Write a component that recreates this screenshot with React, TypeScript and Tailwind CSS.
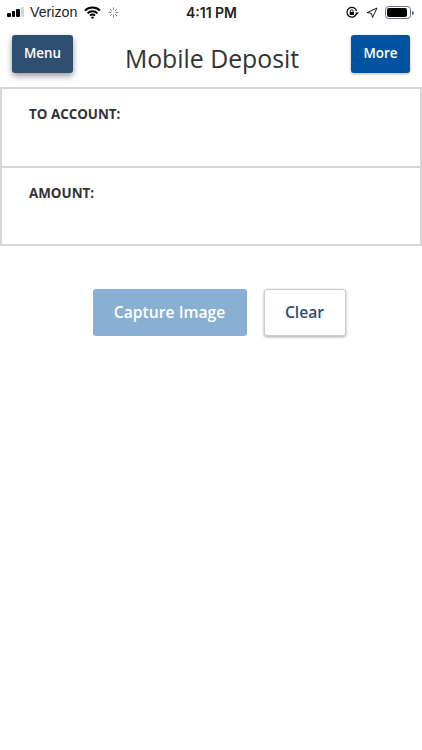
import { Navigation } from "lucide-react";

function StatusBar() {
  return (
    <div className="flex h-[25px] items-center justify-between pl-[7px] pr-[8px] text-[14.2px] text-[#222]">
      <div className="flex w-[150px] items-center">
        <div className="flex items-end gap-[1px]">
          <span className="h-[4px] w-[3.5px] rounded-[1px] bg-black" />
          <span className="h-[6px] w-[3.5px] rounded-[1px] bg-black" />
          <span className="h-[8px] w-[3.5px] rounded-[1px] bg-black" />
          <span className="h-[10px] w-[3.5px] rounded-[1px] bg-gray-300" />
        </div>
        <span className="ml-[6px]">Verizon</span>
        <svg className="ml-[7px]" width="17" height="13" viewBox="0 0 17 13" fill="none" stroke="#000" strokeWidth="2">
          <path d="M1 4.6A10.8 10.8 0 0 1 16 4.6" />
          <path d="M3.6 7.2A7.1 7.1 0 0 1 13.4 7.2" />
          <path d="M6 9.6A3.6 3.6 0 0 1 11 9.6" />
          <circle cx="8.5" cy="11.6" r="1.2" fill="#000" stroke="none" />
        </svg>
        <svg className="ml-[7px]" width="11" height="11" viewBox="0 0 12 12" stroke="#777" strokeWidth="1">
          <path d="M6 0.5V3.5M6 8.5V11.5M0.5 6H3.5M8.5 6H11.5M2.1 2.1L4.2 4.2M7.8 7.8L9.9 9.9M2.1 9.9L4.2 7.8M7.8 4.2L9.9 2.1" />
        </svg>
      </div>
      <span className="ml-[2px] font-['Inter',sans-serif] text-[14px] font-semibold">4:11 PM</span>
      <div className="flex w-[150px] items-center justify-end">
        <svg width="13" height="13" viewBox="0 0 13 13" fill="none" stroke="#000" strokeWidth="1.2">
          <path d="M10.6 7.5A4.9 4.9 0 1 1 10.6 5" />
          <path d="M9 6.4H13L11 8.8Z" fill="#000" stroke="none" />
          <rect x="3.7" y="6" width="4.2" height="3" fill="#000" stroke="none" />
          <path d="M4.5 6V5A1.3 1.3 0 0 1 7.1 5V6" strokeWidth="0.9" />
        </svg>
        <Navigation className="ml-[7px] h-[12px] w-[12px] text-black" strokeWidth={1.8} />
        <div className="ml-[7px] flex items-center">
          <div className="flex h-[13px] w-[26px] items-center rounded-[3.5px] border border-gray-500 p-[1px]">
            <div className="h-full w-[20px] rounded-[2px] bg-black" />
          </div>
          <span className="ml-[1px] h-[4px] w-[1.5px] rounded-r-sm bg-gray-500" />
        </div>
      </div>
    </div>
  );
}

function Field({ label }: { label: string }) {
  return (
    <div className="h-[79px] border-2 border-[#d6d6d6] border-b-0 pl-[27px] pt-[15px] text-[13.4px] font-bold leading-[20px] text-[#333] last:h-[80px] last:border-b-2">
      {label}
    </div>
  );
}

export default function App() {
  return (
    <div className="min-h-[750px] bg-white font-['Open_Sans',sans-serif]">
      <div className="font-['Liberation_Sans',sans-serif]">
        <StatusBar />
      </div>
      <header className="flex h-[62px] items-start justify-between pl-[12px] pr-[12px] pt-[10px]">
        <button className="flex h-[38px] w-[61px] items-center justify-center rounded-[3px] bg-[#2f4f70] pb-[2px] text-[13.4px] font-semibold text-white shadow-[0_3px_6px_rgba(0,0,0,0.4)]">
          Menu
        </button>
        <h1 className="mt-[5px] text-[24.8px] leading-[36px] text-[#333]">Mobile Deposit</h1>
        <button className="flex h-[38px] w-[59px] items-center justify-center rounded-[3px] bg-[#00549f] pb-[2px] text-[13.4px] font-semibold text-white shadow-[0_1px_3px_rgba(0,0,0,0.3)]">
          More
        </button>
      </header>
      <div className="flex flex-col">
        <Field label="TO ACCOUNT:" />
        <Field label="AMOUNT:" />
      </div>
      <div className="mt-[43px] flex justify-center gap-[17px] pl-[16px]">
        <button className="h-[47px] w-[154px] rounded-[3px] bg-[#89afd2] text-[15.7px] font-semibold text-white">
          Capture Image
        </button>
        <button className="h-[47px] w-[82px] rounded-[3px] border border-[#ccc] bg-white text-[15.7px] font-semibold text-[#2f4f70] shadow-[0_1px_3px_rgba(0,0,0,0.35)]">
          Clear
        </button>
      </div>
    </div>
  );
}
